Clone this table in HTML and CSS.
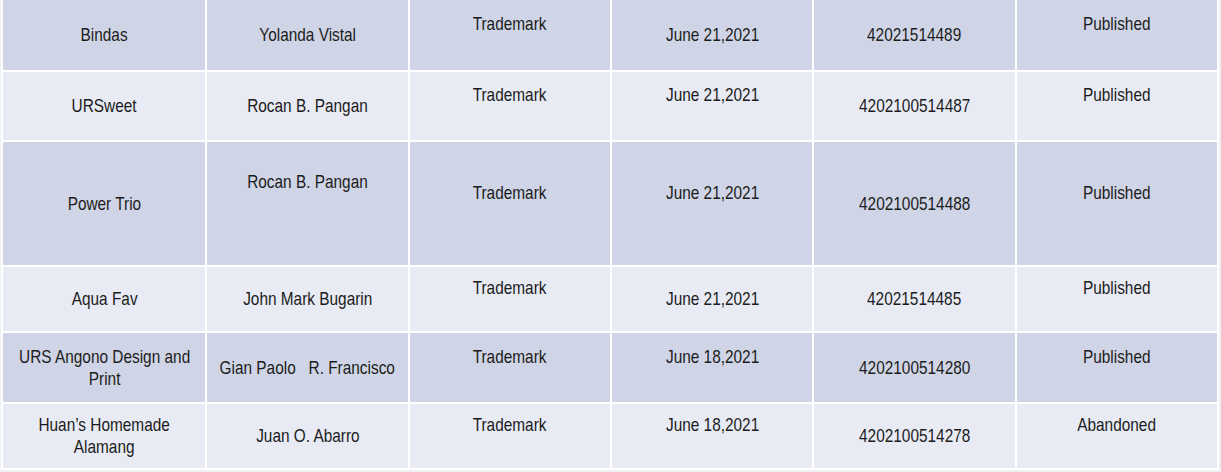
FILE: index.html
```html
<!DOCTYPE html>
<html lang="en">
<head>
<meta charset="utf-8">
<title>Trademark applications</title>
<link rel="stylesheet" href="styles.css">
</head>
<body>
<div class="sheet" role="table">
  <div class="row dark" role="row">
    <div class="cell"><span class="t">Bindas</span></div>
    <div class="cell"><span class="t">Yolanda Vistal</span></div>
    <div class="cell raised"><span class="t">Trademark</span></div>
    <div class="cell"><span class="t">June 21,2021</span></div>
    <div class="cell"><span class="t">42021514489</span></div>
    <div class="cell raised"><span class="t">Published</span></div>
  </div>
  <div class="row light" role="row">
    <div class="cell"><span class="t">URSweet</span></div>
    <div class="cell"><span class="t">Rocan B. Pangan</span></div>
    <div class="cell raised"><span class="t">Trademark</span></div>
    <div class="cell raised"><span class="t">June 21,2021</span></div>
    <div class="cell"><span class="t">4202100514487</span></div>
    <div class="cell raised"><span class="t">Published</span></div>
  </div>
  <div class="row dark" role="row">
    <div class="cell"><span class="t">Power Trio</span></div>
    <div class="cell raised2"><span class="t">Rocan B. Pangan</span></div>
    <div class="cell raised"><span class="t">Trademark</span></div>
    <div class="cell raised"><span class="t">June 21,2021</span></div>
    <div class="cell"><span class="t">4202100514488</span></div>
    <div class="cell raised"><span class="t">Published</span></div>
  </div>
  <div class="row light" role="row">
    <div class="cell"><span class="t">Aqua Fav</span></div>
    <div class="cell"><span class="t">John Mark Bugarin</span></div>
    <div class="cell raised"><span class="t">Trademark</span></div>
    <div class="cell"><span class="t">June 21,2021</span></div>
    <div class="cell"><span class="t">42021514485</span></div>
    <div class="cell raised"><span class="t">Published</span></div>
  </div>
  <div class="row dark" role="row">
    <div class="cell"><span class="t">URS Angono Design and<br>Print</span></div>
    <div class="cell"><span class="t">Gian Paolo&nbsp;&nbsp; R. Francisco</span></div>
    <div class="cell raised"><span class="t">Trademark</span></div>
    <div class="cell raised"><span class="t">June 18,2021</span></div>
    <div class="cell"><span class="t">4202100514280</span></div>
    <div class="cell raised"><span class="t">Published</span></div>
  </div>
  <div class="row light" role="row">
    <div class="cell"><span class="t">Huan’s Homemade<br>Alamang</span></div>
    <div class="cell"><span class="t">Juan O. Abarro</span></div>
    <div class="cell raised"><span class="t">Trademark</span></div>
    <div class="cell raised"><span class="t">June 18,2021</span></div>
    <div class="cell"><span class="t">4202100514278</span></div>
    <div class="cell raised"><span class="t">Abandoned</span></div>
  </div>
</div>
</body>
</html>
```

FILE: styles.css
```css
html, body {
  margin: 0;
  padding: 0;
}
body {
  background: #eef0f4;
  width: 1221px;
  height: 472px;
  overflow: hidden;
  font-family: "Liberation Sans", Arial, sans-serif;
  font-size: 19px;
  line-height: 22px;
  color: #1c1c20;
}
.sheet {
  display: grid;
  grid-template-columns: repeat(6, 1fr);
  grid-template-rows: 70px 68px 123px 64px 69px 64px;
  row-gap: 2px;
  width: 1218px;
  padding: 0 2px 2px 2px;
  margin-left: 1px;
  background: #ffffff;
  box-sizing: border-box;
}
.row {
  display: contents;
}
.cell {
  display: flex;
  align-items: center;
  justify-content: center;
  text-align: center;
  padding: 0 4px;
  border-left: 2px solid #ffffff;
  box-sizing: border-box;
  overflow: hidden;
}
.cell:first-child {
  border-left: 0;
}
.t {
  display: inline-block;
  white-space: nowrap;
  transform: scaleX(0.81);
  transform-origin: center;
}
.dark .cell {
  background: #cfd5e6;
}
.light .cell {
  background: #e8ebf4;
}
.raised {
  padding-bottom: 22px;
}
.raised2 {
  padding-bottom: 44px;
}
```
